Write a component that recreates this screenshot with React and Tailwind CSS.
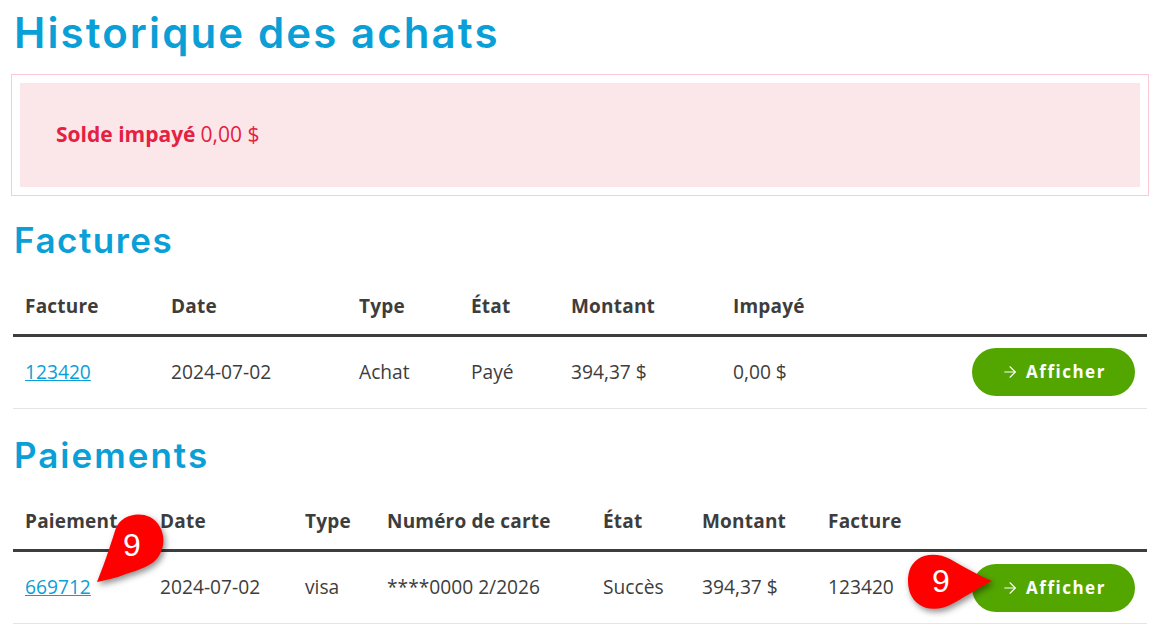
import { ArrowRight } from 'lucide-react'

const invoiceCols = ['w-[146px]', 'w-[188px]', 'w-[112px]', 'w-[100px]', 'w-[162px]', 'w-[150px]', '']
const paymentCols = ['w-[135px]', 'w-[145px]', 'w-[82px]', 'w-[216px]', 'w-[99px]', 'w-[126px]', 'w-[99px]', '']

function ViewButton() {
  return (
    <button className="ml-auto flex h-12 w-[163px] items-center justify-center gap-[7px] rounded-full bg-[#53a600] text-[17px] font-bold tracking-[1.5px] text-white">
      <ArrowRight size={18} strokeWidth={1.5} />
      Afficher
    </button>
  )
}

function DataTable({ cols, headers, row, link }) {
  return (
    <table className="w-[1134px] table-fixed border-collapse">
      <colgroup>
        {cols.map((c, i) => <col key={i} className={c} />)}
      </colgroup>
      <thead>
        <tr className="h-[56px] border-b-[3px] border-[#3d3d3d]">
          {headers.map((h, i) => (
            <th key={i} className="px-3 pb-px text-left text-[19px] font-bold tracking-[0.2px] text-[#3d3d3d]">{h}</th>
          ))}
          <th />
        </tr>
      </thead>
      <tbody>
        <tr className="h-[73px] border-b border-[#e5e5e5]">
          <td className="px-3">
            <a href="#" className="text-[#0a9fd6] underline">{link}</a>
          </td>
          {row.map((v, i) => <td key={i} className="px-3">{v}</td>)}
          <td className="px-3"><ViewButton /></td>
        </tr>
      </tbody>
    </table>
  )
}

export default function App() {
  return (
    <div className="relative h-[634px] w-[1160px] overflow-hidden bg-white pl-[13px] pt-[6px] font-['Open_Sans',sans-serif] text-[19.2px] text-[#3d3d3d]">
      <h1 className="h-[54px] pl-px font-['Inter',sans-serif] text-[42px] font-semibold leading-[54px] tracking-[2.1px] text-[#0a9fd6]">Historique des achats</h1>

      <div className="-ml-[2px] mt-[14px] w-[1138px] border border-[#fbc9d6] p-[8px]">
        <div className="flex h-[104px] items-center bg-[#fbe7ea] pl-9 text-[21px] text-[#e5213f]">
          <strong className="font-bold">Solde impayé</strong>
          <span className="ml-[5px]">0,00 $</span>
        </div>
      </div>

      <h2 className="mt-[22px] h-[44px] pl-px font-['Inter',sans-serif] text-[35px] font-semibold leading-[44px] tracking-[1.5px] text-[#0a9fd6]">Factures</h2>
      <div className="mt-[17px]">
        <DataTable
          cols={invoiceCols}
          headers={['Facture', 'Date', 'Type', 'État', 'Montant', 'Impayé']}
          link="123420"
          row={['2024-07-02', 'Achat', 'Payé', '394,37 $', '0,00 $']}
        />
      </div>

      <h2 className="mt-[24px] h-[44px] pl-px font-['Inter',sans-serif] text-[35px] font-semibold leading-[44px] tracking-[2px] text-[#0a9fd6]">Paiements</h2>
      <div className="mt-[18px]">
        <DataTable
          cols={paymentCols}
          headers={['Paiement', 'Date', 'Type', 'Numéro de carte', 'État', 'Montant', 'Facture']}
          link="669712"
          row={['2024-07-02', 'visa', '****0000 2/2026', 'Succès', '394,37 $', '123420']}
        />
      </div>

      {/* callout markers */}
      <div className="absolute left-[90px] top-[508px] h-[84px] w-[84px]">
        <svg width="84" height="84" viewBox="0 0 84 84" className="drop-shadow-[2px_3px_3px_rgba(0,0,0,0.45)]">
          <path d="M7 74 C16 52 22 32 26 20 C31 8 47 3 60 9 C73 16 77 33 70 46 C64 58 48 62 36 66 C26 70 16 72 7 74 Z" fill="#ff0000" />
        </svg>
        <span className="absolute left-[29px] top-[19px] w-[26px] text-center font-['Liberation_Sans',sans-serif] text-[32px] leading-[36px] text-white">9</span>
      </div>
      <div className="absolute left-[900px] top-[546px] h-[72px] w-[100px]">
        <svg width="100" height="72" viewBox="0 0 100 72" className="drop-shadow-[2px_3px_3px_rgba(0,0,0,0.45)]">
          <path d="M92 35 C80 30 62 20 50 13 C40 8 27 7 18 13 C9 19 8 29 8 35 C8 42 10 53 20 59 C29 65 42 63 50 59 C62 53 78 42 92 35 Z" fill="#ff0000" />
        </svg>
        <span className="absolute left-[28px] top-[17px] w-[26px] text-center font-['Liberation_Sans',sans-serif] text-[32px] leading-[36px] text-white">9</span>
      </div>
    </div>
  )
}
